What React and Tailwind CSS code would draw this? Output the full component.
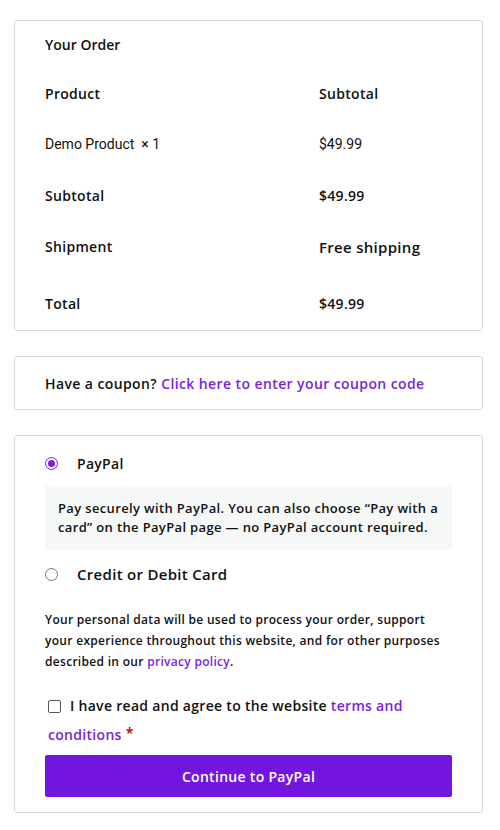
import React from "react";

const font = { fontFamily: "'Open Sans', 'Liberation Sans', sans-serif" };

function Row({ label, value, className = "h-[51px]", labelClass = "", valueClass = "" }) {
  return (
    <div className={`grid grid-cols-[274px_1fr] items-center ${className}`}>
      <div className={`text-[14px] font-semibold ${labelClass}`}>{label}</div>
      <div className={`text-[14px] font-semibold ${valueClass}`}>{value}</div>
    </div>
  );
}

function Radio({ checked }) {
  return checked ? (
    <span className="w-[13px] h-[13px] rounded-full border-[1.5px] border-[#7a1fe0] flex items-center justify-center bg-white shrink-0">
      <span className="w-[7px] h-[7px] rounded-full bg-[#7a1fe0]" />
    </span>
  ) : (
    <span className="w-[13px] h-[13px] rounded-full border border-[#767676] bg-white shrink-0" />
  );
}

export default function App() {
  return (
    <div className="bg-white w-[500px] min-h-[830px] text-[#111] pt-[20px] pl-[14px] pb-[17px] tracking-[0.3px]" style={font}>
      {/* order table */}
      <div className="w-[469px] border border-[#d5d8dc] rounded-[3px] px-[30px] pt-[14px]">
        <h3 className="h-[20px] leading-[20px] text-[14px] font-semibold tracking-normal">Your Order</h3>
        <div className="mt-[13px]">
          <Row label="Product" value="Subtotal" />
          <div className="grid grid-cols-[274px_1fr] items-center h-[51px] text-[14px] tracking-normal" style={{ fontFamily: "Roboto, sans-serif" }}>
            <div>Demo Product&nbsp; × 1</div>
            <div>$49.99</div>
          </div>
          <Row label="Subtotal" value="$49.99" />
          <Row label="Shipment" value="Free shipping" valueClass="text-[15px] pt-[2px]" />
          <Row label="Total" value="$49.99" className="h-[58px] pt-[4px]" valueClass="font-extrabold" />
        </div>
      </div>

      {/* coupon */}
      <div className="w-[469px] mt-[25px] h-[54px] border border-[#d5d8dc] rounded-[3px] px-[30px] flex items-center">
        <p className="text-[14px] font-semibold tracking-[0.4px]">
          Have a coupon? <a href="#" className="text-[#7a1fe0]">Click here to enter your coupon code</a>
        </p>
      </div>

      {/* payment */}
      <div className="w-[469px] mt-[25px] border border-[#d5d8dc] rounded-[3px] px-[30px] pt-[17px] pb-[15px]">
        <label className="flex items-center h-[20px]">
          <Radio checked />
          <span className="ml-[19px] text-[14px] font-semibold">PayPal</span>
        </label>
        <div className="mt-[13px] bg-[#f6f8f7] px-[13px] py-[13px] text-[13px] leading-[19px] font-semibold tracking-[0.35px]">
          Pay securely with PayPal. You can also choose “Pay with a card” on the PayPal page — no PayPal account required.
        </div>
        <label className="mt-[14px] flex items-center h-[20px]">
          <Radio />
          <span className="ml-[19px] text-[15px] font-semibold">Credit or Debit Card</span>
        </label>
        <p className="mt-[25px] text-[12px] leading-[21px] font-semibold">
          Your personal data will be used to process your order, support your experience throughout this website, and for other purposes described in our{" "}
          <a href="#" className="text-[#7a1fe0]">privacy policy</a>.
        </p>
        <p className="mt-[20px] pl-[3px] text-[14px] leading-[27px] font-semibold">
          <span className="inline-block align-[-2px] w-[13px] h-[13px] border border-[#555] rounded-[2px] bg-white mr-[9px]" />
          I have read and agree to the website <a href="#" className="text-[#7a1fe0]">terms and conditions</a>{" "}
          <span className="text-[#b00000] align-[2px]">*</span>
        </p>
        <button className="mt-[7px] w-full h-[42px] bg-[#7216df] rounded-[2px] text-white text-[14px] font-semibold">
          Continue to PayPal
        </button>
      </div>
    </div>
  );
}
